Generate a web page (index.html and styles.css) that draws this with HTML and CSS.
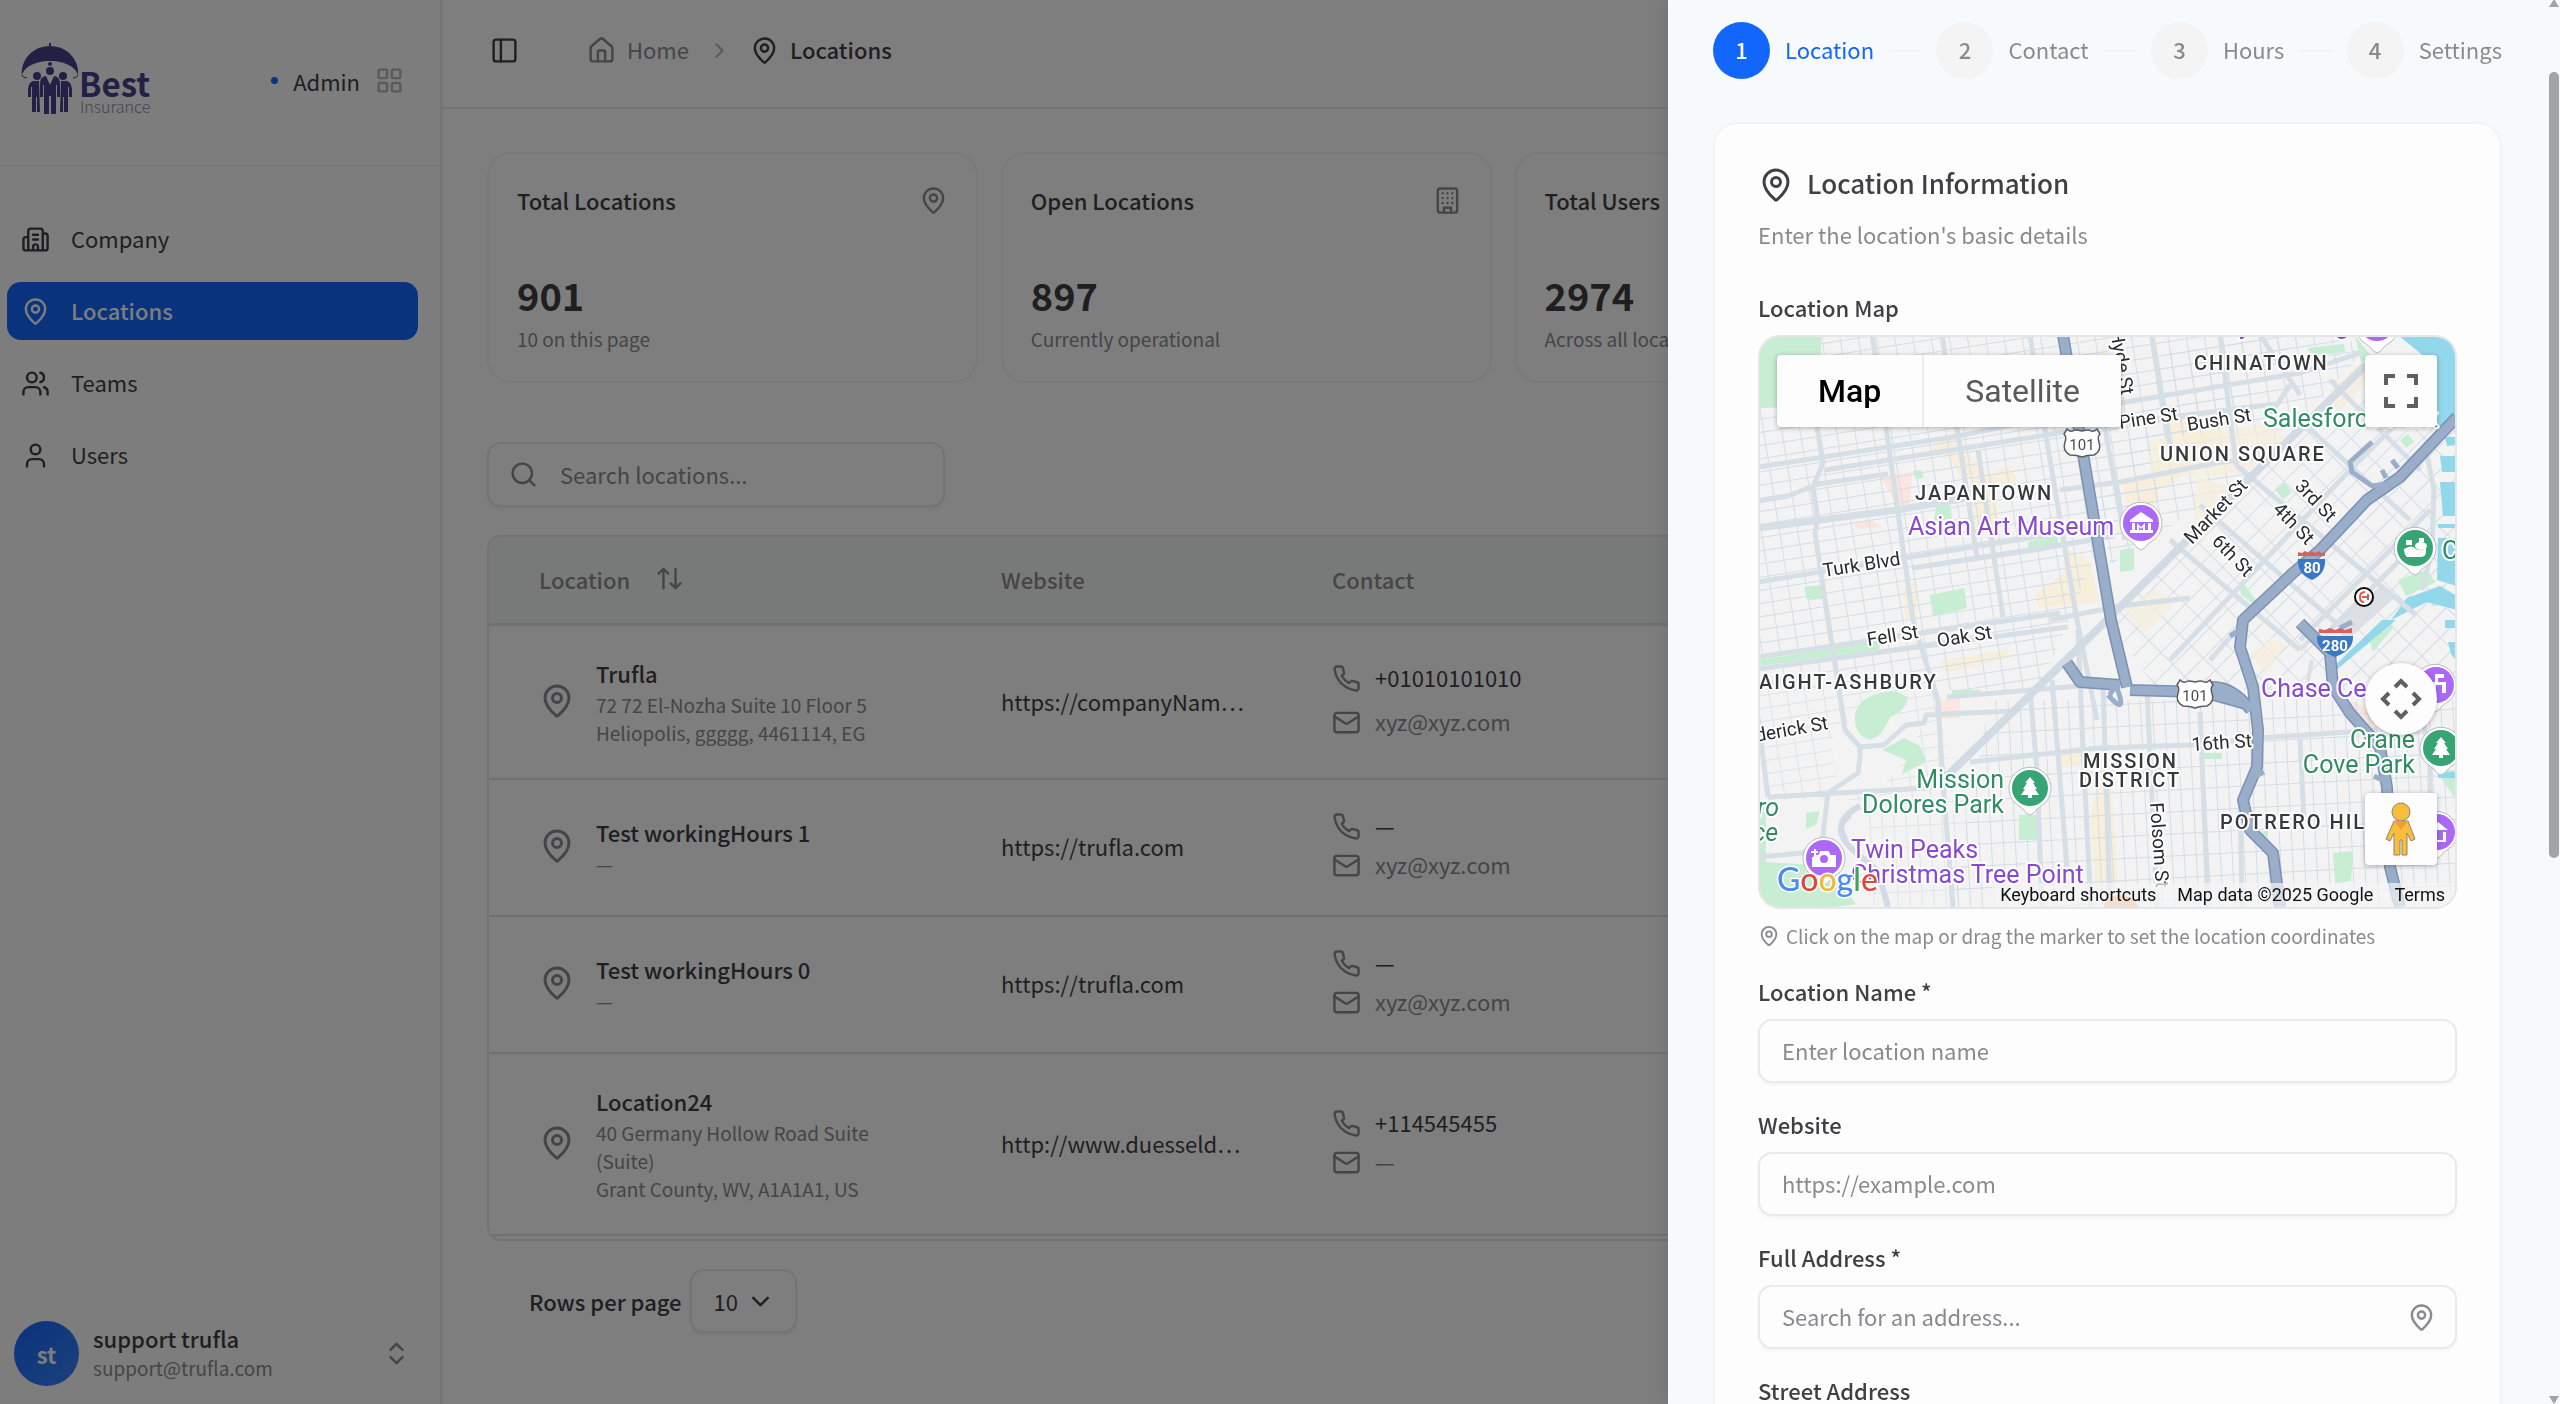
FILE: index.html
```html
<!DOCTYPE html>
<html lang="en">
<head>
<meta charset="utf-8">
<title>Locations</title>
<link rel="stylesheet" href="styles.css">
</head>
<body>
<svg class="sprite" aria-hidden="true">
  <symbol id="pin" viewBox="0 0 24 24"><path d="M20 10c0 4.993-5.539 10.193-7.399 11.799a1 1 0 0 1-1.202 0C9.539 20.193 4 14.993 4 10a8 8 0 0 1 16 0"/><circle cx="12" cy="10" r="3"/></symbol>
  <symbol id="panel" viewBox="0 0 24 24"><rect x="3" y="3" width="18" height="18" rx="2"/><path d="M9 3v18"/></symbol>
  <symbol id="house" viewBox="0 0 24 24"><path d="M15 21v-8a1 1 0 0 0-1-1h-4a1 1 0 0 0-1 1v8"/><path d="M3 10a2 2 0 0 1 .709-1.528l7-5.999a2 2 0 0 1 2.582 0l7 5.999A2 2 0 0 1 21 10v9a2 2 0 0 1-2 2H5a2 2 0 0 1-2-2z"/></symbol>
  <symbol id="grid" viewBox="0 0 24 24"><rect x="3" y="3" width="7" height="7" rx="1"/><rect x="14" y="3" width="7" height="7" rx="1"/><rect x="14" y="14" width="7" height="7" rx="1"/><rect x="3" y="14" width="7" height="7" rx="1"/></symbol>
  <symbol id="company" viewBox="0 0 24 24"><path d="M10 12h4M10 8h4M14 21v-3a2 2 0 0 0-4 0v3M6 10H4a2 2 0 0 0-2 2v7a2 2 0 0 0 2 2h16a2 2 0 0 0 2-2V9a2 2 0 0 0-2-2h-2M6 21V5a2 2 0 0 1 2-2h8a2 2 0 0 1 2 2v16"/></symbol>
  <symbol id="users" viewBox="0 0 24 24"><path d="M16 21v-2a4 4 0 0 0-4-4H6a4 4 0 0 0-4 4v2M22 21v-2a4 4 0 0 0-3-3.87M16 3.13a4 4 0 0 1 0 7.75"/><circle cx="9" cy="7" r="4"/></symbol>
  <symbol id="user" viewBox="0 0 24 24"><path d="M19 21v-2a4 4 0 0 0-4-4H9a4 4 0 0 0-4 4v2"/><circle cx="12" cy="7" r="4"/></symbol>
  <symbol id="building" viewBox="0 0 24 24"><rect x="4" y="2" width="16" height="20" rx="2"/><path d="M9 22v-4h6v4M8 6h.01M16 6h.01M12 6h.01M12 10h.01M12 14h.01M16 10h.01M16 14h.01M8 10h.01M8 14h.01"/></symbol>
  <symbol id="search" viewBox="0 0 24 24"><circle cx="11" cy="11" r="8"/><path d="m21 21-4.300-4.300"/></symbol>
  <symbol id="sort" viewBox="0 0 24 24"><path d="m21 16-4 4-4-4M17 20V4M3 8l4-4 4 4M7 4v16"/></symbol>
  <symbol id="phone" viewBox="0 0 24 24"><path d="M22 16.920v3a2 2 0 0 1-2.180 2 19.790 19.790 0 0 1-8.630-3.070 19.500 19.500 0 0 1-6-6 19.790 19.790 0 0 1-3.070-8.670A2 2 0 0 1 4.110 2h3a2 2 0 0 1 2 1.720 12.840 12.840 0 0 0 .7 2.810 2 2 0 0 1-.45 2.110L8.090 9.910a16 16 0 0 0 6 6l1.270-1.270a2 2 0 0 1 2.110-.45 12.840 12.840 0 0 0 2.810.7A2 2 0 0 1 22 16.920z"/></symbol>
  <symbol id="mail" viewBox="0 0 24 24"><rect x="2" y="4" width="20" height="16" rx="2"/><path d="m22 7-8.970 5.700a1.940 1.940 0 0 1-2.060 0L2 7"/></symbol>
  <symbol id="down" viewBox="0 0 24 24"><path d="m6 9 6 6 6-6"/></symbol>
  <symbol id="right" viewBox="0 0 24 24"><path d="m9 18 6-6-6-6"/></symbol>
  <symbol id="updown" viewBox="0 0 24 24"><path d="m7 15 5 5 5-5M7 9l5-5 5 5"/></symbol>
</svg>

<div class="app">
  <aside class="sidebar">
    <div class="sidebar-head">
      <svg class="logo" viewBox="0 0 132 76" role="img" aria-label="Best Insurance">
        <g fill="#46408c">
          <path d="M29 0h2v3h-2zM2 33C0 18 12 3 30 3s30 15 28 30c-1-8-12-15-28-15S3 25 2 33z"/>
          <circle cx="30" cy="21" r="2"/>
          <circle cx="30" cy="28" r="4"/><circle cx="17" cy="33" r="4"/><circle cx="43" cy="33" r="4"/>
          <path d="M20 54V40q0-6 6-7l4 9 4-9q6 1 6 7v14h-3V42h-1v29h-5V53h-2v18h-5V42h-1v12z"/>
          <path d="M19 38h-6q-4 1-5 8v8h3V44h1v25h4V54h1v15h3zM41 38h6q4 1 5 8v8h-3V44h-1v25h-4V54h-1v15h-3z"/>
        </g>
        <path d="M2 32q1 3 5 3M58 32q-1 3-5 3" fill="none" stroke="#46408c" stroke-width="1"/>
        <text class="logo-name" x="59" y="54">Best</text>
        <text class="logo-sub" x="60" y="70">Insurance</text>
      </svg>
      <div class="role"><span class="role-dot"></span><span>Admin</span><svg class="icon muted-2"><use href="#grid"/></svg></div>
    </div>
    <nav class="nav">
      <a href="#company"><svg class="icon"><use href="#company"/></svg><span>Company</span></a>
      <a href="#locations" class="active"><svg class="icon"><use href="#pin"/></svg><span>Locations</span></a>
      <a href="#teams"><svg class="icon"><use href="#users"/></svg><span>Teams</span></a>
      <a href="#users-page"><svg class="icon"><use href="#user"/></svg><span>Users</span></a>
    </nav>
    <button class="account" type="button">
      <span class="avatar">st</span>
      <span class="account-text"><span class="account-name">support trufla</span><span class="account-mail">support@trufla.com</span></span>
      <svg class="icon muted"><use href="#updown"/></svg>
    </button>
  </aside>

  <main class="main">
    <header class="topbar">
      <button class="icon-button" type="button" aria-label="Toggle sidebar"><svg class="icon"><use href="#panel"/></svg></button>
      <nav class="crumbs">
        <a href="#home" class="crumb muted"><svg class="icon"><use href="#house"/></svg><span>Home</span></a>
        <svg class="crumb-sep muted-2"><use href="#right"/></svg>
        <a href="#locations" class="crumb current"><svg class="icon"><use href="#pin"/></svg><span>Locations</span></a>
      </nav>
    </header>
    <div class="content">
      <section class="stats">
        <article class="stat"><div class="stat-head"><h2>Total Locations</h2><svg class="icon muted"><use href="#pin"/></svg></div><p class="stat-value">901</p><p class="stat-note">10 on this page</p></article>
        <article class="stat"><div class="stat-head"><h2>Open Locations</h2><svg class="icon muted"><use href="#building"/></svg></div><p class="stat-value">897</p><p class="stat-note">Currently operational</p></article>
        <article class="stat"><div class="stat-head"><h2>Total Users</h2></div><p class="stat-value">2974</p><p class="stat-note">Across all locations</p></article>
      </section>
      <label class="search"><svg class="icon muted"><use href="#search"/></svg><input type="search" placeholder="Search locations..." aria-label="Search locations"></label>
      <div class="table-box">
        <table>
          <colgroup><col class="col-location"><col class="col-website"><col></colgroup>
          <thead><tr><th><button class="sort" type="button">Location<svg class="icon"><use href="#sort"/></svg></button></th><th>Website</th><th>Contact</th></tr></thead>
          <tbody>
            <tr>
              <td><div class="place"><svg class="icon-lg muted"><use href="#pin"/></svg><div><div class="place-name">Trufla</div><div class="place-line">72 72 El-Nozha Suite 10 Floor 5</div><div class="place-line">Heliopolis, ggggg, 4461114, EG</div></div></div></td>
              <td><a href="#site">https://companyNam…</a></td>
              <td><div class="contact contact-full"><a href="#tel"><svg class="icon muted"><use href="#phone"/></svg><span>+01010101010</span></a><a href="#mail" class="muted"><svg class="icon"><use href="#mail"/></svg><span>xyz@xyz.com</span></a></div></td>
            </tr>
            <tr>
              <td><div class="place"><svg class="icon-lg muted"><use href="#pin"/></svg><div><div class="place-name">Test workingHours 1</div><div class="place-line">—</div></div></div></td>
              <td><a href="#site">https://trufla.com</a></td>
              <td><div class="contact"><div><svg class="icon muted"><use href="#phone"/></svg><span>—</span></div><a href="#mail" class="muted"><svg class="icon"><use href="#mail"/></svg><span>xyz@xyz.com</span></a></div></td>
            </tr>
            <tr>
              <td><div class="place"><svg class="icon-lg muted"><use href="#pin"/></svg><div><div class="place-name">Test workingHours 0</div><div class="place-line">—</div></div></div></td>
              <td><a href="#site">https://trufla.com</a></td>
              <td><div class="contact"><div><svg class="icon muted"><use href="#phone"/></svg><span>—</span></div><a href="#mail" class="muted"><svg class="icon"><use href="#mail"/></svg><span>xyz@xyz.com</span></a></div></td>
            </tr>
            <tr>
              <td><div class="place"><svg class="icon-lg muted"><use href="#pin"/></svg><div><div class="place-name">Location24</div><div class="place-line">40 Germany Hollow Road Suite (Suite)</div><div class="place-line">Grant County, WV, A1A1A1, US</div></div></div></td>
              <td><a href="#site">http://www.duesseld…</a></td>
              <td><div class="contact"><a href="#tel"><svg class="icon muted"><use href="#phone"/></svg><span>+114545455</span></a><div class="muted"><svg class="icon"><use href="#mail"/></svg><span>—</span></div></div></td>
            </tr>
          </tbody>
        </table>
      </div>
      <div class="pager">
        <label for="rows">Rows per page</label>
        <span class="select"><select id="rows"><option>10</option></select><svg class="icon"><use href="#down"/></svg></span>
      </div>
    </div>
  </main>
</div>
<div class="overlay"></div>

<aside class="drawer">
  <ol class="steps">
    <li class="step on"><span class="step-no">1</span><span class="step-name">Location</span></li>
    <li class="step-line"></li>
    <li class="step"><span class="step-no">2</span><span class="step-name">Contact</span></li>
    <li class="step-line"></li>
    <li class="step"><span class="step-no">3</span><span class="step-name">Hours</span></li>
    <li class="step-line"></li>
    <li class="step"><span class="step-no">4</span><span class="step-name">Settings</span></li>
  </ol>
  <form class="card">
    <h1 class="card-title"><svg class="icon-lg"><use href="#pin"/></svg><span>Location Information</span></h1>
    <p class="card-sub">Enter the location's basic details</p>
    <div class="field map-field">
      <h3 class="label">Location Map</h3>
      <div class="map">
        <svg class="map-art" viewBox="1760 337 695 570" preserveAspectRatio="xMidYMid slice">
          <defs>
            <pattern id="g1" width="18" height="13" patternUnits="userSpaceOnUse" patternTransform="rotate(-9)"><path d="M0 0H18M0 0V13" stroke="#d4dde6" stroke-width="2" fill="none"/></pattern>
            <pattern id="g2" width="26" height="17" patternUnits="userSpaceOnUse" patternTransform="rotate(-45)"><path d="M0 0H26M0 0V17" stroke="#d4dde6" stroke-width="2" fill="none"/></pattern>
            <pattern id="g3" width="12" height="22" patternUnits="userSpaceOnUse" patternTransform="rotate(-3)"><path d="M0 0H12M0 0V22" stroke="#d4dde6" stroke-width="2" fill="none"/></pattern>
            <symbol id="drop" viewBox="-24 -24 48 56" overflow="visible"><path d="M0 27Q-4 26-7 21L-15 15A21 21 0 1 1 15 15L7 21Q4 26 0 27Z" fill="#fff" stroke="#b9bcc0" stroke-width="1"/></symbol>
            <symbol id="us" viewBox="-20 -16 40 32" overflow="visible"><path d="M-15-14Q-11-10-7-13Q-3-13 0-12Q3-13 7-13Q11-10 15-14L18-9Q15-6 17-1Q20 8 12 12Q5 12 0 14Q-5 12-12 12Q-20 8-17-1Q-15-6-18-9Z" fill="#fff" stroke="#5b5e62" stroke-width="1.500"/></symbol>
          </defs>
          <rect x="1758" y="335" width="699" height="572" fill="#f3f3f3"/>
          <g fill="#f7eedb">
            <path d="M2170 420l110-12 20 40-60 34-90 6zM2120 480l40-4-4 50-20 4zM2190 470l60 20-40 60-16-8zM1926 452l30-22 12 22 14 24-20 4-10-20zM1970 480l40-14 8 16-22 4 2 40-22 4zM2034 596l30-24 2-24 24 14 10 40-60 6zM1942 660l66-10v9l-64 14zM2060 750l26-6v20l-26 4zM2090 820l16-80 8 80 4 60-22 10zM2104 345l8 30-16-2zM2250 655l20-16 16 6-20 28zM2330 380l40-40 6 20-40 50zM1903 590l14-10v40l-12-2zM2120 640l30-36 30-12-40 60-14 22zM2445 445h12v35h-12z"/>
          </g>
          <path d="M1880 476l32-4-2 32-12 2zM1940 700l20-2v20l-20 1zM1850 522l22-2 10 7-24 2zM2350 700l26 14 6 24-14-4z" fill="#fbe5e0"/>
          <path d="M1758 335h700v190H2107L2040 690H1758z" fill="url(#g1)"/>
          <path d="M2300 335L2107 560V690H2457V335z" fill="#f3f3f3"/>
          <path d="M2170 350l140-15 60 10-120 130-140 90-10-60z" fill="url(#g1)"/>
          <path d="M2366 365L2107 620l50 70H2457V365z" fill="url(#g2)"/>
          <g fill="#f7eedb" opacity=".7"><path d="M2150 440l120-16 20 20-50 30-90 4zM2196 476l44 14-36 50-10-6zM2330 390l40-36 4 20-36 40zM2250 655l20-16 16 6-20 28zM2124 610l30-20 20 14-30 30z"/></g>
          <path d="M1990 700H2457V907H1950z" fill="url(#g3)"/>
          <path d="M1758 690h175l20 90-10 20H1768z" fill="url(#g1)" opacity=".7"/>
          <path d="M1830 740l50-50 40 50-40 50-40 10zM1758 800h110v107h-110z" fill="#f3f3f3"/>
          <path d="M1868 800h100v107h-100z" fill="url(#g3)" opacity=".6"/>
          <g fill="#c7edd3">
            <path d="M1758 335h63v30l-24 42-39 1zM1936 505h14l2 14-18 2zM1930 595l34-7 3 20-34 8zM1804 587l17-2 1 14-15 1zM2028 542l30-8v12l-30 2zM1759 660l122-20-2 10-120 16zM1855 715q4-22 40-24l13 6q-2 14-18 20-10 24-22 22-14-4-13-24zM1882 750l22-12 16 8 6 16-24 12 4-14zM2019 815h18v25h-18zM1806 813l14-2-4 14-10 4zM1758 800l8 2v60l60 4 30 38-40 6h-60zM2308 348l36-4 1 8-34 4zM2355 336l16 20-10 6zM2120 550l14-2v22l-14 2zM2276 490l8-8 8 10-9 8zM2240 587l4-3 12 16-3 4-12-10zM2398 580l28-10 10 12-30 14zM2400 440l8-6 6 8-8 6zM2370 640l22-20 1 8-20 24zM2333 853l20-2-2 30-16 2zM2204 753h18v6h-18zM1952 690h28v6l-28 2zM2436 770h20v30zM2430 598l12-3v10l-10 1zM1913 471l8-1 3 8-8 1zM2260 833l8-4v10z"/>
          </g>
          <g fill="#93d7ea">
            <path d="M2398 335h59v82l-20 20v-70zM2445 437h12v8l-10 1zM2440 456h17v16h-15zM2440 482h17v34h-14zM2438 524h19v4h-19zM2438 538h19v48l-20-6zM2440 586l17 10v14l-30-8-36 18 16-22zM2445 620h12v8h-12zM2448 642h9v20l-6-8zM2438 772h19v6h-19zM2382 620h14l-62 52-8 2z"/>
          </g>
          <g fill="none" stroke="#d6dee6" stroke-width="5" stroke-linejoin="round">
            <path d="M1872 335l4 24M1817 427l6 36-10 24 5 33-3 13 13 87 9 57 8 53 15 17 24-2 22-20 18-2 2-8 86-4M1886 427l27 193 9 30 16 50 4 70 11 137M1942 335l18 112 17 110M1978 450l25 167M2030 335l15 95 23 137 9 53 20 100M2100 400l25 140M2152 335l20 120M2220 335l16 130M2260 335l40 60"/>
            <path d="M1758 467l195-30 167-34 180-30 60-20M1825 470l140-22 150-24 160-20M1758 501l30-5 30-12 70-10M1758 582l152-25 150-24 50-6M1912 568l122-18 80-14M1758 657l165-24 137-20M1758 669l160-22 150-20M1947 697l120-10 53-4M1970 762l130-14 90-3 70-7 117-8M1768 797l175-10M2060 490l60-8 100-20 60-6M2050 620l70-14 70-8M2290 385l-20 30M1800 680l-40 6M1768 797l-10-80M1860 747l0 10-2 16-30 20-6 50-20 10-44 4"/>
            <path d="M2030 690l7 80 5 137M2052 680l15 187M2078 630l5 120 8 157M2103 683l7 224M2147 690l10 217M2200 712l8 195M2240 800l2 107M2300 740l4 80M2420 700l10 60v40l8 50"/>
            <path d="M2236 465l180 150M2200 505l150 130M2170 540l130 110M2300 420l110 100M2330 380l90 90M2170 660l180-190 80-80M2210 660l80-90M2300 640l130-130M2330 630l80-80M2426 450l8 40-2 60-10 40"/>
          </g>
          <path d="M1758 528l139-18 76-13" fill="none" stroke="#d6dee6" stroke-width="7"/>
          <path d="M1943 780L2107 620 2260 468 2366 365" fill="none" stroke="#d2dbe4" stroke-width="8"/>
          <path d="M1846 840q-14-20 14-34M1850 815q-20 14 4 36l24 20 10 36" fill="none" stroke="#d2dbe4" stroke-width="6"/>
          <path d="M2340 625l40-36 10 10-44 40zM2300 650l20-20M2312 660l-6 30" fill="#dcdfe3" stroke="#dcdfe3" stroke-width="4"/>
          <g fill="none" stroke-linejoin="round">
            <path d="M2063 335l16 95 32 190 16 67M2067 663l13 19 40 3M2130 690l70 2M2205 688q24-6 46 22M2210 694l36 10M2457 417l-57 60-33 23-47 50-27 23-50 47-3 27 13 40 5 43-1 37-14 33 7 30 23 23 7 54M2300 623l30 30 3 34 17 26 30 34 7 40 3 80 10 40" stroke="#7a91b6" stroke-width="12"/>
            <path d="M2063 335l16 95 32 190 16 67M2067 663l13 19 40 3M2130 690l70 2M2205 688q24-6 46 22M2210 694l36 10M2457 417l-57 60-33 23-47 50-27 23-50 47-3 27 13 40 5 43-1 37-14 33 7 30 23 23 7 54M2300 623l30 30 3 34 17 26 30 34 7 40 3 80 10 40" stroke="#9baec9" stroke-width="9"/>
            <path d="M2372 442l-22 20 2 10 20 14 14-2M2110 695q6-14 10 2t-12-2M2230 636l10-6M2264 772l-8 4M2374 776l8 4M2340 628l12-6M2398 468l-6-8M2386 478l-4-8" stroke="#9baec9" stroke-width="5"/>
          </g>
          <g class="place-label green">
            <text x="2263" y="427">Salesforce Park</text>
            <text x="2004" y="788" text-anchor="end">Mission</text><text x="2004" y="813" text-anchor="end">Dolores Park</text>
            <text x="2415" y="748" text-anchor="end">Crane</text><text x="2415" y="773" text-anchor="end">Cove Park</text>
            <text x="2442" y="559">C</text>
            <text x="1779" y="816" text-anchor="end" font-style="italic">ro</text><text x="1778" y="841" text-anchor="end" font-style="italic">ce</text>
          </g>
          <g class="place-label violet">
            <text x="1908" y="535">Asian Art Museum</text><text x="1851" y="858">Twin Peaks</text><text x="1851" y="883">Christmas Tree Point</text>
            <text x="2261" y="697">Chase Ce</text><text x="2239" y="334">y</text><text x="2335" y="334">g</text>
          </g>
          <g class="district">
            <text x="2194" y="370">CHINATOWN</text><text x="1915" y="500">JAPANTOWN</text><text x="2160" y="461">UNION SQUARE</text>
            <text x="1759" y="689">AIGHT-ASHBURY</text><text x="2083" y="768">MISSION</text><text x="2079" y="787">DISTRICT</text><text x="2220" y="829">POTRERO HIL</text>
          </g>
          <g class="street">
            <text transform="translate(2120 429) rotate(-9)">Pine St</text>
            <text transform="translate(2188 431) rotate(-9)">Bush St</text>
            <text transform="translate(2110 331) rotate(80)">Hyde St</text>
            <text transform="translate(2192 545) rotate(-46)">Market St</text>
            <text transform="translate(2294 487) rotate(46)">3rd St</text>
            <text transform="translate(2272 510) rotate(46)">4th St</text>
            <text transform="translate(2211 542) rotate(46)">6th St</text>
            <text transform="translate(1824 577) rotate(-9)">Turk Blvd</text>
            <text transform="translate(1868 646) rotate(-9)">Fell St</text>
            <text transform="translate(1938 647) rotate(-9)">Oak St</text>
            <text transform="translate(1829 729) rotate(-10)" text-anchor="end">derick St</text>
            <text transform="translate(2192 751) rotate(-4)">16th St</text>
            <text transform="translate(2150 803) rotate(86)">Folsom St</text>
          </g>
          <use href="#us" x="2062" y="427" width="40" height="32"/><text class="shield-us" x="2082" y="450">101</text>
          <use href="#us" x="2175" y="678" width="40" height="32"/><text class="shield-us" x="2195" y="701">101</text>
          <path d="M2298 559h27q1 15-13 21-15-6-14-21z" fill="#3a78c6"/><path d="M2298 556v-4l4 1 3-2 4 2 3-2 3 2 4-2 2 2 4-1v4z" fill="#d9605c"/><text class="shield-i" x="2312" y="573">80</text>
          <path d="M2317 636h36q1 14-18 21-19-7-18-21z" fill="#3a78c6"/><path d="M2319 633v-4l6 1 5-2 5 2 5-2 5 2 7-2v5z" fill="#d9605c"/><text class="shield-i" x="2335" y="651">280</text>
          <use href="#drop" x="2117" y="499" width="48" height="56"/><circle cx="2141" cy="523" r="18" fill="#ac68f7"/>
          <path d="M2130 520l11-8 12 8v2h-23zM2132 523h3v7h-3zM2148 523h3v7h-3zM2130 530h23v3h-23zM2137 530v-7l4 4 4-4v7h-2v-3l-2 2-2-2v3z" fill="#fff"/>
          <use href="#drop" x="2006" y="764" width="48" height="56"/><circle cx="2030" cy="788" r="18" fill="#36a473"/>
          <path id="tree" d="M2030 777l5 6h-2l4 6h-2l4 6h-7v3h-4v-3h-7l4-6h-2l4-6h-2z" fill="#fff"/>
          <use href="#drop" x="2417" y="724" width="48" height="56"/><circle cx="2441" cy="748" r="18" fill="#36a473"/><use href="#tree" x="411" y="-40"/>
          <use href="#drop" x="1800" y="834" width="48" height="56"/><circle cx="1824" cy="858" r="18" fill="#ac68f7"/>
          <path d="M1816 856h3l2-4h7l2 4h5v10h-22v-8zM1815 849v7M1811 852h7" fill="#fff" stroke="#fff" stroke-width="2"/><circle cx="1824" cy="859" r="4" fill="#ac68f7"/>
          <use href="#drop" x="2391" y="524" width="48" height="56"/><circle cx="2415" cy="548" r="18" fill="#36a473"/>
          <path d="M2404 549q8-5 12 0 6 3 10-1v5q-1 4-5 4h-14q-3-3-3-8zM2406 540h6v5h-6zM2419 538h5v4h-5z" fill="#fff"/><ellipse cx="2421" cy="546" rx="6" ry="4" fill="#fff"/>
          <use href="#drop" x="2411" y="661" width="48" height="56"/><circle cx="2436" cy="685" r="18" fill="#ac68f7"/><path d="M2435 674v8h-3v11h4v-8h6v8h4v-11h-8v-4h6v-4z" fill="#fff"/>
          <use href="#drop" x="2412" y="808" width="48" height="56"/><circle cx="2437" cy="832" r="18" fill="#ac68f7"/><path d="M2428 830l10-8 10 8zM2434 832h3v8h-3zM2443 832h3v10h-12v-2h9z" fill="#fff"/>
          <use href="#drop" x="2353" y="302" width="48" height="56"/><circle cx="2377" cy="323" r="18" fill="#ac68f7"/>
          <circle cx="2364" cy="597" r="9" fill="#fff" stroke="#0b0b0b" stroke-width="2"/><path d="M2365 592q-5 0-5 5t4 5M2362 597h7M2368 594v6" fill="none" stroke="#e2574a" stroke-width="2"/>
          <path d="M2104 907q2-11 15-12 16 1 19 12z" fill="#eaa777"/>
          <text class="google" x="1777" y="891"><tspan fill="#4a8af4">G</tspan><tspan fill="#dc4a3c">o</tspan><tspan fill="#f5b63a">o</tspan><tspan fill="#4a8af4">g</tspan><tspan fill="#3fa35c">l</tspan><tspan fill="#dc4a3c">e</tspan></text>
        </svg>
        <div class="map-types"><button type="button" class="on">Map</button><button type="button">Satellite</button></div>
        <button type="button" class="map-btn fullscreen" aria-label="Full screen"><svg viewBox="0 0 34 34"><path d="M2 11V2h9M23 2h9v9M32 23v9h-9M11 32H2v-9" fill="none" stroke="#5f6063" stroke-width="4"/></svg></button>
        <button type="button" class="map-btn pan" aria-label="Pan"><svg viewBox="0 0 42 42"><path d="M15 9l6-6 6 6M15 33l6 6 6-6M9 15l-6 6 6 6M33 15l6 6-6 6" fill="none" stroke="#5f6063" stroke-width="4"/></svg></button>
        <button type="button" class="map-btn pegman" aria-label="Street View"><svg viewBox="0 0 32 54"><g fill="#fabd3b" stroke="#8b8375" stroke-width="1"><path d="M9 19h14l7 18-4 2-4-8v22h-5V38h-2v15H9V31l-4 8-4-2z"/><circle cx="16" cy="10" r="9"/></g><path d="M9 19h14l-7 9z" fill="#e9a134"/></svg></button>
        <div class="map-legal"><button type="button">Keyboard shortcuts</button><span>Map data ©2025 Google</span><a href="#terms">Terms</a></div>
      </div>
      <p class="hint"><svg><use href="#pin"/></svg>Click on the map or drag the marker to set the location coordinates</p>
    </div>
    <div class="field"><label class="label" for="name">Location Name *</label><input class="input" id="name" placeholder="Enter location name"></div>
    <div class="field"><label class="label" for="site">Website</label><input class="input" id="site" placeholder="https://example.com"></div>
    <div class="field"><label class="label" for="addr">Full Address *</label><div class="with-icon"><input class="input" id="addr" placeholder="Search for an address..."><svg class="icon muted"><use href="#pin"/></svg></div></div>
    <div class="field"><label class="label" for="street">Street Address</label><input class="input" id="street"></div>
  </form>
  <div class="scrollbar"><span class="arrow up"></span><span class="thumb"></span><span class="arrow down"></span></div>
</aside>
</body>
</html>
```
FILE: styles.css
```css
* { box-sizing: border-box; }
body, h1, h2, h3, p, ol { margin: 0; padding: 0; }
body {
  height: 100vh;
  overflow: hidden;
  background: #fcfcfc;
  color: #3f3f44;
  font: 400 22px/36px "Noto Sans CJK SC", "Open Sans", sans-serif;
}
button, input, select { font: inherit; color: inherit; }
button { border: 0; padding: 0; background: none; cursor: pointer; }
a { color: inherit; text-decoration: none; }
.sprite { position: absolute; width: 0; height: 0; }
.icon, .icon-lg, .crumb-sep, .hint svg {
  flex: none;
  width: 29px;
  height: 29px;
  fill: none;
  stroke: currentColor;
  stroke-width: 2;
  stroke-linecap: round;
  stroke-linejoin: round;
}
.icon-lg { width: 36px; height: 36px; }
.muted { color: #8a8a8e; }
.muted-2 { color: #b4b4b6; }

/* The typeface sits low in its line box; text beside an icon is lifted to match */
.nav span, .crumb span, .step-name, .step-no, .contact span, .card-title span, .account-text { padding-bottom: 3px; }

.app { display: flex; height: 100vh; }

/* Sidebar */
.sidebar {
  flex: none;
  display: flex;
  flex-direction: column;
  width: 443px;
  border-right: 3px solid #ebebeb;
  background: #fafafa;
}
.sidebar-head {
  display: flex;
  align-items: center;
  justify-content: space-between;
  height: 167px;
  padding: 0 36px 4px 20px;
  border-bottom: 2px solid #f3f3f3;
}
.logo { width: 132px; height: 76px; }
.logo-name { font: 700 33px "Noto Sans CJK SC", sans-serif; fill: #46408c; }
.logo-sub { font: 300 16px "Noto Sans CJK SC", sans-serif; fill: #8b88a8; }
.role { display: flex; align-items: center; gap: 15px; }
.role-dot { width: 7px; height: 7px; border-radius: 50%; background: #1266fa; }
.nav {
  display: flex;
  flex-direction: column;
  gap: 14px;
  flex: 1;
  padding: 43px 22px 0 7px;
}
.nav a {
  display: flex;
  align-items: center;
  gap: 21px;
  height: 58px;
  padding: 0 14px;
  border-radius: 14px;
}
.nav a.active { background: #1266fa; color: #fafafa; font-weight: 500; }
.account {
  display: flex;
  align-items: center;
  gap: 14px;
  height: 125px;
  padding: 22px 29px 0 14px;
  border-top: 2px solid #f8f8f8;
  text-align: left;
}
.avatar {
  display: grid;
  place-items: center;
  width: 65px;
  height: 65px;
  border-radius: 50%;
  background: linear-gradient(135deg, #1266fa, #3b82f6);
  color: #fafafa;
  font-weight: 700;
}
.account-text { display: flex; flex-direction: column; flex: 1; }
.account-name { font-weight: 500; line-height: 32px; }
.account-mail { color: #8a8a8e; font-size: 19px; line-height: 28px; }

/* Main */
.main { flex: 1; min-width: 0; }
.topbar {
  display: flex;
  align-items: center;
  gap: 68px;
  height: 109px;
  padding: 0 47px 6px;
  border-bottom: 2px solid #e8e8e8;
}
.icon-button { display: flex; }
.crumbs { display: flex; align-items: center; gap: 18px; }
.crumb { display: flex; align-items: center; gap: 11px; }
.crumb.current { font-weight: 500; }
.crumb-sep { width: 25px; height: 25px; }
.content { padding: 43px 41px 0 44px; }
.stats { display: grid; grid-template-columns: repeat(4, 1fr); gap: 23px; }
.stat { padding: 28px; border: 2px solid #f3f3f3; border-radius: 24px; background: #fdfdfd; }
.stat-head { display: flex; justify-content: space-between; align-items: center; height: 36px; }
.stat h2 { font-size: 22px; font-weight: 500; }
.stat-value { margin-top: 55px; font-size: 38px; font-weight: 700; line-height: 44px; }
.stat-note { margin-top: 8px; color: #8a8a8e; font-size: 19px; line-height: 28px; }
.search {
  display: flex;
  align-items: center;
  gap: 22px;
  width: 458px;
  height: 65px;
  margin-top: 59px;
  padding: 0 20px;
  border: 2px solid #e9e9e9;
  border-radius: 14px;
  background: #fdfdfd;
  box-shadow: 0 2px 3px #0000000d;
}
.search input { flex: 1; min-width: 0; border: 0; outline: 0; padding: 0 0 2px; background: none; }
input::placeholder { color: #8a8a8e; opacity: 1; }
.table-box {
  margin-top: 28px;
  padding-bottom: 3px;
  border: 2px solid #e6e6e6;
  border-radius: 14px;
  overflow: hidden;
  background: #fdfdfd;
}
table { width: 100%; border-collapse: collapse; table-layout: fixed; }
.col-location { width: 498px; }
.col-website { width: 331px; }
th { height: 87px; padding: 0 14px 2px; background: #f1f4f2; border-bottom: 3px solid #e3e3e3; color: #8a8a8e; font-weight: 500; text-align: left; }
td { padding: 29px 14px 31px; border-bottom: 2px solid #e3e3e3; }
th:first-child, td:first-child { padding-left: 50px; }
.sort { display: flex; align-items: center; gap: 25px; font-weight: 500; }
.place { display: flex; align-items: center; gap: 21px; max-width: 370px; }
.place-name { font-weight: 500; line-height: 36px; }
.place-line { color: #8a8a8e; font-size: 19px; line-height: 28px; }
.contact { display: flex; flex-direction: column; gap: 3px; }
.contact-full { gap: 8px; }
.contact > * { display: flex; align-items: center; gap: 14px; height: 36px; }
.pager { display: flex; align-items: center; gap: 8px; margin-top: 28px; padding-left: 42px; font-weight: 500; }
.select { position: relative; font-weight: 400; }
.select select {
  display: block;
  width: 107px;
  height: 64px;
  padding: 0 22px;
  appearance: none;
  border: 2px solid #e9e9e9;
  border-radius: 14px;
  background: #fdfdfd;
  box-shadow: 0 2px 3px #0000000d;
}
.select .icon { position: absolute; right: 22px; top: 18px; pointer-events: none; }

.overlay { position: fixed; inset: 0; background: #00000080; }

/* Drawer */
.drawer {
  position: fixed;
  inset: 0 0 0 auto;
  width: 892px;
  padding: 22px 58px 0 45px;
  overflow: hidden;
  background: #f6fafd;
  box-shadow: 0 0 24px #0000001f;
}
.steps { display: flex; align-items: center; justify-content: space-between; list-style: none; height: 57px; }
.step { display: flex; align-items: center; gap: 15px; color: #8a8a8e; }
.step.on { color: #1366fb; }
.step-no { display: grid; place-items: center; width: 57px; height: 57px; border-radius: 50%; background: #f4f4f4; font-weight: 500; }
.on .step-no { background: #1366fb; color: #fff; }
.step-line { width: 32px; height: 2px; background: #f1f2f4; }
.card {
  margin-top: 43px;
  padding: 41px 43px;
  border: 2px solid #f3f4f5;
  border-radius: 24px;
  background: #fdfdfd;
}
.card-title { display: flex; align-items: center; gap: 13px; font-size: 26px; font-weight: 500; line-height: 36px; }
.card-sub { margin: 14px 0 39px; color: #8a8a8e; line-height: 32px; }
.label { font-size: 22px; font-weight: 500; }
.field { display: flex; flex-direction: column; gap: 10px; margin-bottom: 23px; }
.input {
  width: 100%;
  height: 64px;
  padding: 0 22px 2px;
  border: 2px solid #e9eaeb;
  border-radius: 14px;
  outline: 0;
  background: #fdfdfd;
  box-shadow: 0 2px 3px #0000000a;
}
.with-icon { position: relative; }
.with-icon .icon { position: absolute; right: 21px; top: 18px; }
.hint { display: flex; align-items: center; gap: 6px; margin-top: 3px; color: #8a8a8e; font-size: 19px; line-height: 28px; }
.hint svg { width: 22px; height: 22px; }

/* Map */
.map { position: relative; height: 574px; border: 2px solid #e4e6e8; border-radius: 22px; overflow: hidden; font-family: Roboto, sans-serif; }
.map-art { display: block; width: 100%; height: 100%; }
.map-art text { paint-order: stroke; stroke: #fff; stroke-width: 4px; stroke-linejoin: round; font-family: Roboto, sans-serif; }
.place-label text { font-size: 25px; }
.green text { fill: #2f8c63; }
.violet text { fill: #8549d3; }
.district text { font-size: 20px; font-weight: 500; letter-spacing: 2px; fill: #37393c; }
.street text { font-size: 19px; fill: #2a2b2d; }
.map-art .shield-us { font-size: 15px; fill: #4a4c50; text-anchor: middle; stroke: none; }
.map-art .shield-i { font-size: 15px; font-weight: 700; fill: #fff; text-anchor: middle; stroke: none; }
.map-art .google { font: 500 32px Lato, sans-serif; stroke-width: 3px; }
.map-types {
  position: absolute;
  left: 17px;
  top: 18px;
  display: flex;
  height: 72px;
  border-radius: 4px;
  background: #fdfdfd;
  box-shadow: 0 1px 5px #0000004d;
  font-size: 32px;
}
.map-types button { padding: 0 41px; color: #5a5a5a; }
.map-types button.on { color: #000; font-weight: 500; border-right: 2px solid #ececec; }
.map-btn {
  position: absolute;
  right: 18px;
  display: grid;
  place-items: center;
  width: 72px;
  height: 72px;
  border-radius: 4px;
  background: #fdfdfd;
  box-shadow: 0 1px 5px #0000004d;
}
.fullscreen { top: 18px; }
.fullscreen svg { width: 34px; height: 34px; }
.pan { bottom: 172px; border-radius: 50%; }
.pan svg { width: 42px; height: 42px; }
.pegman { bottom: 42px; }
.pegman svg { width: 32px; height: 54px; }
.map-legal {
  position: absolute;
  right: 0;
  bottom: 0;
  display: flex;
  gap: 21px;
  padding: 0 10px 0 8px;
  background: #f5f5f5b3;
  color: #111;
  font-size: 18px;
  line-height: 24px;
}

/* Scrollbar */
.scrollbar { position: absolute; right: 0; top: 0; bottom: 0; width: 12px; }
.thumb { position: absolute; top: 72px; right: 1px; width: 10px; height: 56%; border-radius: 5px; background: #a3a3a5; }
.arrow { position: absolute; right: 1px; border: 5px solid transparent; }
.up { top: -1px; border-bottom: 8px solid #a3a3a5; border-top: 0; }
.down { bottom: 0; border-top: 8px solid #a3a3a5; border-bottom: 0; }
```
